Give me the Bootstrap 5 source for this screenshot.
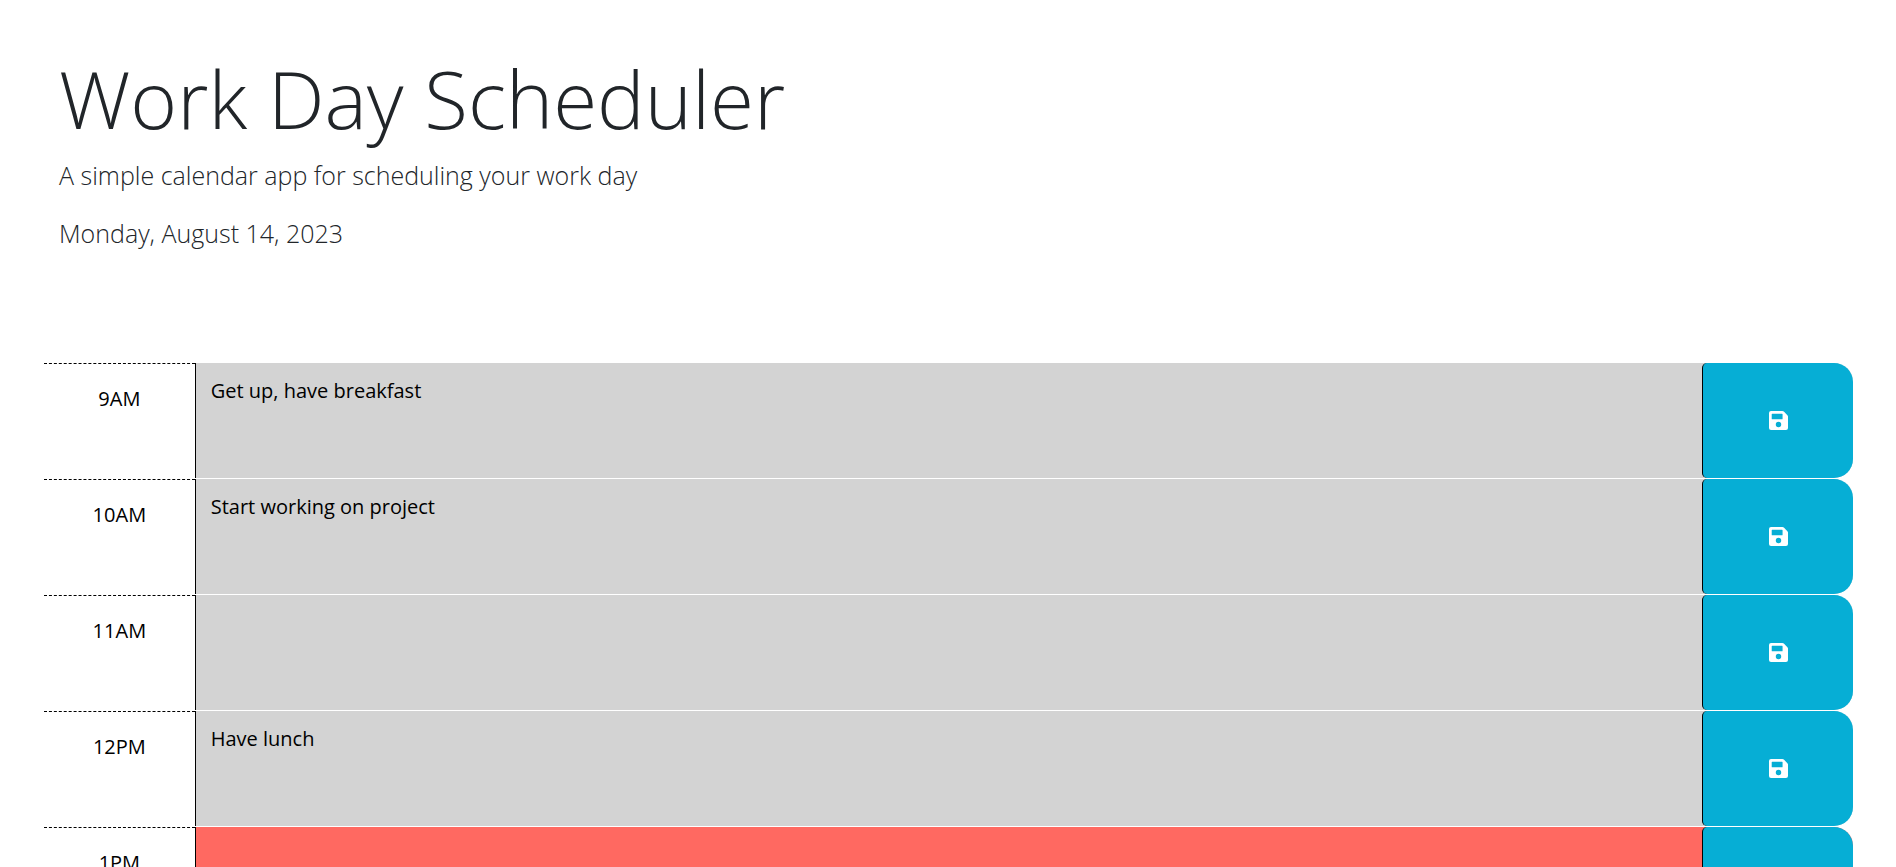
<!DOCTYPE html>
<html lang="en">
<head>
<meta charset="utf-8">
<meta name="viewport" content="width=device-width, initial-scale=1">
<title>Work Day Scheduler</title>
<link href="https://cdn.jsdelivr.net/npm/bootstrap@5.3.0/dist/css/bootstrap.min.css" rel="stylesheet">
<style>
  body { font-family: "Open Sans", sans-serif; font-size: 20px; line-height: 30px; }
  .page-head { padding: 56px 59px 60px; margin-bottom: 30px; }
  .page-head h1 { font-size: 80px; line-height: 84px; font-weight: 300; margin-bottom: 16px; }
  .page-head p { font-size: 25px; line-height: 38px; margin-bottom: 20px; }
  .schedule { padding: 0 43px 0 44px; }
  .time-block { --bs-gutter-x: 0; height: 116px; border-top: 1px solid #fff; border-radius: 19px; background-clip: padding-box; }
  .hour { border-top: 1px dashed #000; background: #fff; color: #000; padding-top: 20px; }
  .description { border: 0; border-left: 1px solid #000; border-radius: 0; resize: none; color: #000; background: transparent; padding: 13px 15px; outline: 0; }
  .past { background-color: #d3d3d3; }
  .present { background-color: #ff6961; }
  .future { background-color: #77dd77; }
  .save-btn { border: 0; border-left: 1px solid #000; border-radius: 5px 19px 19px 5px; background: #06aed5; color: #fff; }
  .save-btn:hover { background: #2b8ca3; color: #fff; }
</style>
</head>
<body>
<svg class="d-none" aria-hidden="true">
  <symbol id="save" viewBox="0 0 448 448">
    <path fill="currentColor" fill-rule="evenodd" d="M434 98 350 14A48 48 0 0 0 316 0H48A48 48 0 0 0 0 48V400A48 48 0 0 0 48 448H400A48 48 0 0 0 448 400V132A48 48 0 0 0 434 98ZM224 384A64 64 0 1 1 224 256A64 64 0 0 1 224 384ZM320 180A12 12 0 0 1 308 192H76A12 12 0 0 1 64 180V76A12 12 0 0 1 76 64H308A12 12 0 0 1 320 76Z"/>
  </symbol>
</svg>
<header class="page-head">
  <h1>Work Day Scheduler</h1>
  <p class="lead">A simple calendar app for scheduling your work day</p>
  <p class="lead">Monday, August 14, 2023</p>
</header>
<main class="container-fluid schedule">
  <div class="row time-block past">
    <label class="col-1 hour text-center" for="hour-9">9AM</label>
    <textarea class="col-10 description" id="hour-9">Get up, have breakfast</textarea>
    <button class="btn col-1 save-btn" type="button" aria-label="Save 9AM"><svg class="d-block mx-auto" width="19" height="19" aria-hidden="true"><use href="#save"/></svg></button>
  </div>
  <div class="row time-block past">
    <label class="col-1 hour text-center" for="hour-10">10AM</label>
    <textarea class="col-10 description" id="hour-10">Start working on project</textarea>
    <button class="btn col-1 save-btn" type="button" aria-label="Save 10AM"><svg class="d-block mx-auto" width="19" height="19" aria-hidden="true"><use href="#save"/></svg></button>
  </div>
  <div class="row time-block past">
    <label class="col-1 hour text-center" for="hour-11">11AM</label>
    <textarea class="col-10 description" id="hour-11"></textarea>
    <button class="btn col-1 save-btn" type="button" aria-label="Save 11AM"><svg class="d-block mx-auto" width="19" height="19" aria-hidden="true"><use href="#save"/></svg></button>
  </div>
  <div class="row time-block past">
    <label class="col-1 hour text-center" for="hour-12">12PM</label>
    <textarea class="col-10 description" id="hour-12">Have lunch</textarea>
    <button class="btn col-1 save-btn" type="button" aria-label="Save 12PM"><svg class="d-block mx-auto" width="19" height="19" aria-hidden="true"><use href="#save"/></svg></button>
  </div>
  <div class="row time-block present">
    <label class="col-1 hour text-center" for="hour-13">1PM</label>
    <textarea class="col-10 description" id="hour-13"></textarea>
    <button class="btn col-1 save-btn" type="button" aria-label="Save 1PM"><svg class="d-block mx-auto" width="19" height="19" aria-hidden="true"><use href="#save"/></svg></button>
  </div>
</main>
<script src="https://cdn.jsdelivr.net/npm/bootstrap@5.3.0/dist/js/bootstrap.bundle.min.js"></script>
</body>
</html>
